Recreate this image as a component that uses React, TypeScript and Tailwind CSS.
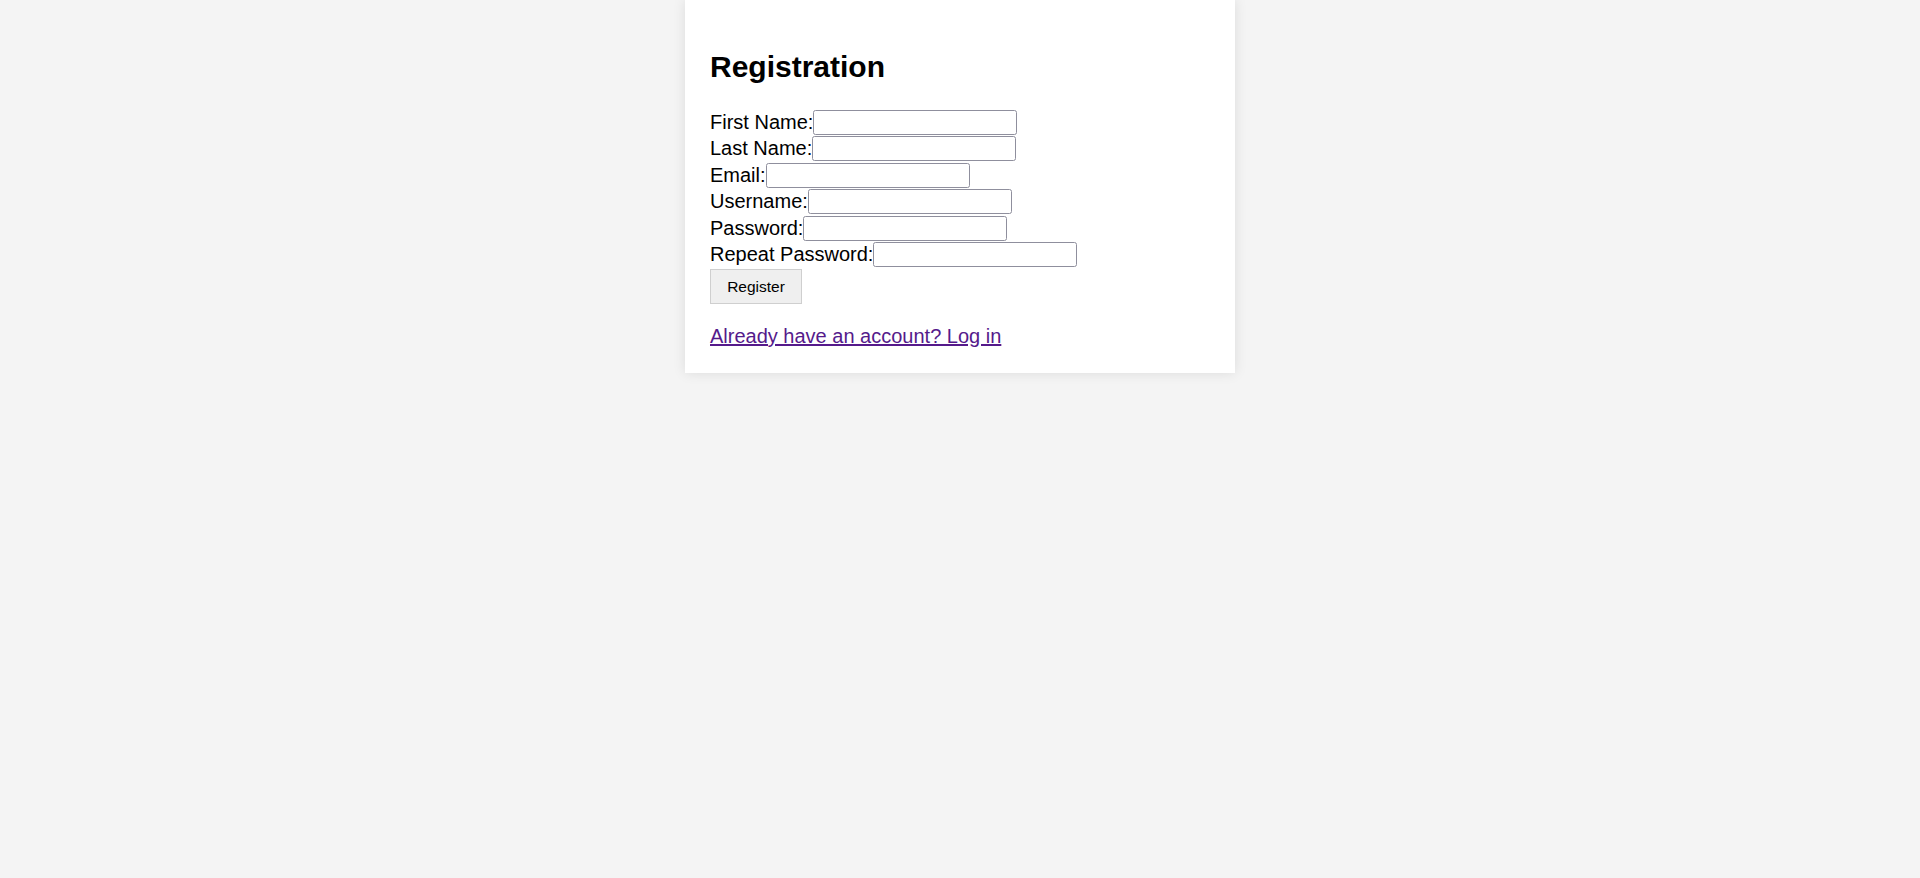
const fields = [
  { label: 'First Name:', type: 'text' },
  { label: 'Last Name:', type: 'text' },
  { label: 'Email:', type: 'email' },
  { label: 'Username:', type: 'text' },
  { label: 'Password:', type: 'password' },
  { label: 'Repeat Password:', type: 'password' },
];

export default function App() {
  return (
    <div className="min-h-screen bg-[#f4f4f4] font-['Liberation_Sans',Arial,sans-serif] text-black">
      <div className="mx-auto w-[550px] bg-white px-[25px] pt-[50px] pb-[25px] shadow-[0_0_12px_rgba(0,0,0,0.1)]">
        <h1 className="m-0 mb-[25px] text-[30px] font-bold leading-[34px]">Registration</h1>

        <form onSubmit={(e) => e.preventDefault()}>
          {fields.map((f) => (
            <div key={f.label} className="flex h-[26.5px] items-center text-[20px] leading-[23px]">
              <label>{f.label}</label>
              <input
                type={f.type}
                className="h-[25px] w-[204px] rounded-[2.5px] border border-[#8f8f9d] bg-white px-[2px] outline-none"
              />
            </div>
          ))}
          <button
            type="submit"
            className="mt-[1px] h-[35px] w-[92px] border border-[#cfcfcf] bg-[#efefef] text-[15.5px] text-black"
          >
            Register
          </button>
        </form>

        <a href="#" className="mt-[21px] block w-fit text-[20px] leading-[23px] text-[#551a8b] underline">
          Already have an account? Log in
        </a>
      </div>
    </div>
  );
}
